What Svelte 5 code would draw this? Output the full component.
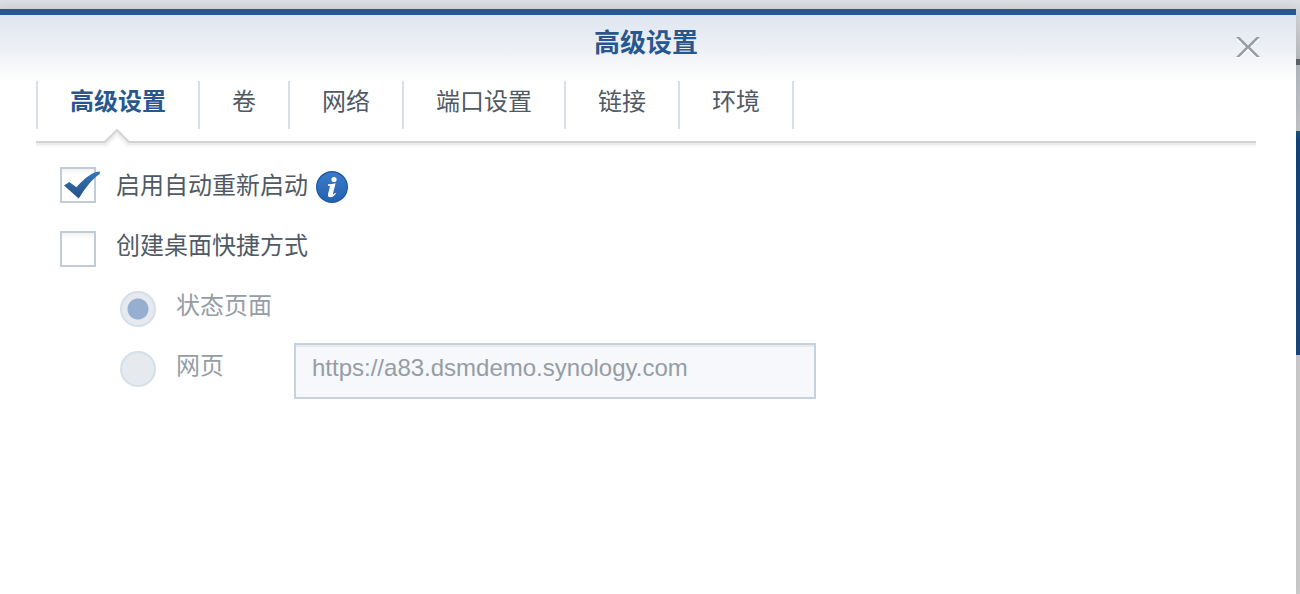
<script>
  const tabs = ['高级设置', '卷', '网络', '端口设置', '链接', '环境'];
  let active = $state(0);
  let autoRestart = $state(true);
  let shortcut = $state(false);
  let target = $state('status');
  let url = $state('https://a83.dsmdemo.synology.com');
</script>

<div class="desktop">
  <div class="dialog" role="dialog" aria-labelledby="dialog-title">
    <header>
      <h1 id="dialog-title">高级设置</h1>
      <button class="close" type="button" aria-label="关闭">
        <svg viewBox="0 0 26 24" width="26" height="24" aria-hidden="true">
          <path d="M1 3H4.500L13 11L21.500 3H25L15 12.500L25 22H21.500L13 14L4.500 22H1L11 12.500Z" fill="#fff" />
          <path d="M1 1H4.500L13 9.500L21.500 1H25L15 11L25 21H21.500L13 12.500L4.500 21H1L11 11Z" fill="#969ca3" />
        </svg>
      </button>
    </header>

    <div class="tabs" role="tablist">
      {#each tabs as tab, i}
        <button
          type="button"
          role="tab"
          class:active={active === i}
          aria-selected={active === i}
          onclick={() => (active = i)}
        >
          {tab}
          {#if active === i}
            <svg class="notch" viewBox="0 0 26 19" width="26" height="19" aria-hidden="true">
              <path d="M0 12.500H1L13 .5L25 12.500H26V19H0Z" fill="#fff" />
              <path d="M0 17H3L13 7L23 17H26" fill="none" stroke="#f6f6f6" stroke-width="2" />
              <path d="M0 15H2L13 4L24 15H26" fill="none" stroke="#ececec" stroke-width="2" />
              <path d="M0 13H1L13 1L25 13H26" fill="none" stroke="#d3d3d3" stroke-width="2" />
            </svg>
          {/if}
        </button>
      {/each}
    </div>

    <form>
      <div class="row first">
        <span class="check">
          <input id="auto" type="checkbox" bind:checked={autoRestart} />
          {#if autoRestart}
            <svg viewBox="0 0 42 36" width="42" height="36" aria-hidden="true">
              <defs>
                <linearGradient id="tick" x1="0" y1="0" x2="0" y2="1">
                  <stop offset="0" stop-color="#3676b9" />
                  <stop offset="1" stop-color="#255086" />
                </linearGradient>
              </defs>
              <path d="M4 18.500L9.300 15L16.500 20.300C22 13.500 29 7.500 36 5L39.800 4.500V7C33 11.500 27 18.500 18.700 31.500Z" fill="url(#tick)" />
            </svg>
          {/if}
        </span>
        <label for="auto">启用自动重新启动</label>
        <svg class="info" viewBox="0 0 32 32" width="32" height="32" role="img" aria-label="说明">
          <defs>
            <linearGradient id="disc" x1="0" y1="0" x2="0" y2="1">
              <stop offset="0" stop-color="#3b7bcb" />
              <stop offset="1" stop-color="#2562ae" />
            </linearGradient>
          </defs>
          <circle cx="16" cy="16" r="15.300" fill="url(#disc)" stroke="#1d5ba6" stroke-width="1.400" />
          <circle cx="18" cy="8.500" r="2.600" fill="#fff" />
          <path d="M12 13.300Q16 13.200 19.600 12.300L17 22.500Q16.700 23.800 17.400 23.400Q18.200 23 19 21.700L20 22.500Q17.500 26.200 14.500 26.200Q11.300 26.200 12.100 22.700L13.900 15.800Q14.200 14.700 12 14.700Z" fill="#fff" />
        </svg>
      </div>

      <div class="row">
        <span class="check"><input id="shortcut" type="checkbox" bind:checked={shortcut} /></span>
        <label for="shortcut">创建桌面快捷方式</label>
      </div>

      <div class="row sub">
        <input id="status" type="radio" name="target" value="status" bind:group={target} disabled={!shortcut} />
        <label for="status">状态页面</label>
      </div>

      <div class="row sub">
        <input id="web" type="radio" name="target" value="web" bind:group={target} disabled={!shortcut} />
        <label class="web" for="web">网页</label>
        <input type="text" aria-label="网页地址" bind:value={url} disabled={!shortcut} />
      </div>
    </form>
  </div>
</div>

<style>
  :global(body) {
    margin: 0;
  }

  .desktop {
    box-sizing: border-box;
    min-height: 100vh;
    padding: 9px 4px 0 0;
    display: flex;
    background: linear-gradient(
      #dcdfe3 0,
      #d8dbde 9px,
      #bcbdbf 59px,
      #5f646b 59px,
      #5f646b 65px,
      #b6bbc3 65px,
      #c6c7c9 131px,
      #1c5490 131px,
      #13447f 140px,
      #174782 355px,
      #cecece 355px
    );
    font-family: "Liberation Sans", "Noto Sans CJK SC", sans-serif;
    font-size: 24px;
    color: #505a64;
  }

  .dialog {
    box-sizing: border-box;
    flex: 1;
    min-width: 0;
    border-top: 6px solid #28578f;
    background: linear-gradient(#dfe6f0, #eef1f5 36px, #fff 66px);
    box-shadow: 0 0 10px rgba(0, 0, 0, 0.1);
  }

  header {
    display: grid;
    grid-template-columns: 1fr auto 1fr;
    align-items: center;
    height: 66px;
    padding: 0 35px 0 31px;
  }

  h1 {
    grid-column: 2;
    margin: 0;
    padding-bottom: 10px;
    font-size: 26px;
    line-height: 36px;
    font-weight: 700;
    color: #28578f;
  }

  .close {
    justify-self: end;
    display: flex;
    padding: 0;
    border: 0;
    background: none;
  }

  .tabs {
    display: flex;
    margin: 0 40px 0 36px;
    padding-bottom: 12px;
    position: relative;
    border-bottom: 2px solid #d3d3d3;
    box-shadow: 0 2px 0 #ececec, 0 4px 0 #f8f8f8;
  }

  .tabs button {
    position: relative;
    box-sizing: border-box;
    height: 48px;
    padding: 0 32px 6px;
    border: 0;
    border-left: 2px solid #d5e0ea;
    background: none;
    font: inherit;
    line-height: 42px;
    color: inherit;
    white-space: nowrap;
  }

  .tabs button:last-child {
    border-right: 2px solid #d5e0ea;
  }

  .tabs button.active {
    font-weight: 700;
    color: #28578f;
  }

  .notch {
    position: absolute;
    top: 48px;
    left: calc(50% - 14px);
  }

  form {
    padding: 12px 40px 0 60px;
  }

  .row {
    display: flex;
    align-items: flex-start;
    height: 60px;
    padding-top: 16px;
    box-sizing: border-box;
  }

  .row.first {
    padding-top: 12px;
  }

  .sub {
    padding-left: 60px;
    color: #959da5;
  }

  label {
    margin: -4px 0 0 20px;
    line-height: 38px;
  }

  .first label {
    margin-top: 0;
  }

  .web {
    width: 118px;
  }

  .check {
    position: relative;
    display: flex;
  }

  .check svg {
    position: absolute;
    top: 0;
    left: 0;
    pointer-events: none;
  }

  .info {
    margin: 4px 0 0 8px;
  }

  input {
    appearance: none;
    box-sizing: border-box;
    margin: 0;
    flex: none;
  }

  input[type='checkbox'] {
    width: 36px;
    height: 36px;
    border: 2px solid #c3cbd8;
    background: linear-gradient(#f3f3f3, #fff 6px);
  }

  input[type='radio'] {
    width: 36px;
    height: 36px;
    border: 2px solid #d5dfea;
    border-radius: 50%;
    background: #e6eaef;
  }

  input[type='radio']:checked {
    background: radial-gradient(circle, #96afd0 10px, #e6eaef 11px);
  }

  input[type='text'] {
    flex: 0 1 522px;
    min-width: 0;
    height: 56px;
    margin-top: -8px;
    padding: 0 16px 6px;
    border: 2px solid #c8d2df;
    background: #f6f8fb;
    box-shadow: inset 0 2px 0 #e7ebef;
    font: inherit;
    color: #959da5;
  }
</style>
